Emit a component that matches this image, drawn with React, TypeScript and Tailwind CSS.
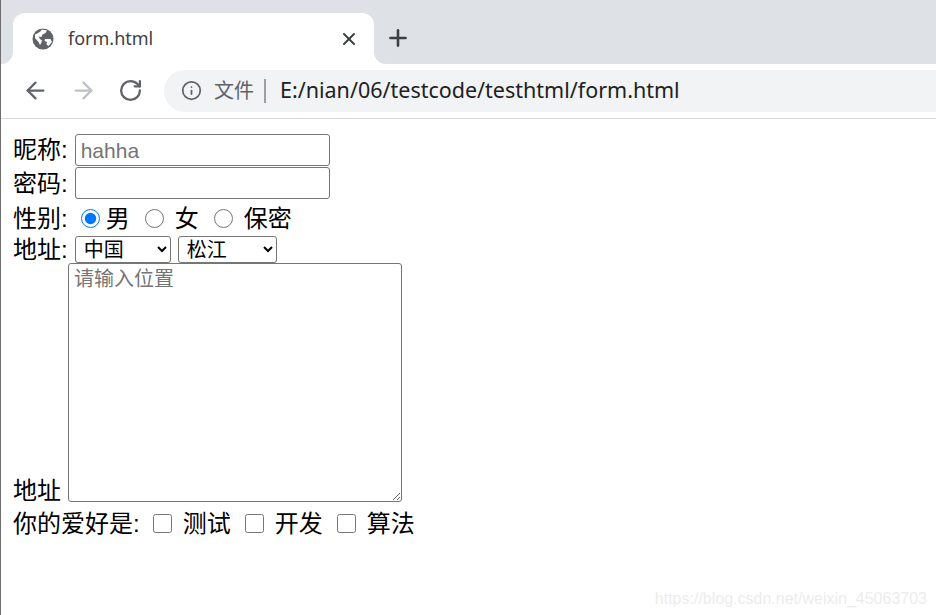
import { X, Plus, ArrowLeft, ArrowRight, RotateCw, Info } from "lucide-react";

const CJK = "font-['Liberation_Sans','Noto_Sans_CJK_SC',sans-serif]";
const UI = "font-['Noto_Sans','Noto_Sans_CJK_SC',sans-serif]";

function Globe() {
  return (
    <svg width="22" height="22" viewBox="0 0 22 22" className="shrink-0">
      <circle cx="11" cy="11" r="10.5" fill="#5f6368" />
      <path
        d="M3 6.5 C6 5 8 4 10 1.5 L15 2.5 L13.5 5 L10.5 6.5 L9.5 9 L6.5 8.5 L8 11 L10 12.5 L9.5 14.5 L8 17 L6.5 14 L3 10 Z"
        fill="#fff"
      />
      <path d="M13 11 L18.5 11 L20 14 L16.5 18 L14.5 16.5 L15 14 L12.5 13 Z" fill="#fff" />
    </svg>
  );
}

function Flare({ side }: { side: "left" | "right" }) {
  return (
    <svg
      width="12"
      height="12"
      viewBox="0 0 12 12"
      className={side === "left" ? "absolute bottom-0 -left-3" : "absolute bottom-0 -right-3"}
    >
      {side === "left" ? (
        <path d="M12 0 A12 12 0 0 1 0 12 L12 12 Z" fill="#fff" />
      ) : (
        <path d="M0 0 A12 12 0 0 0 12 12 L0 12 Z" fill="#fff" />
      )}
    </svg>
  );
}

function BrowserBar() {
  return (
    <header className={`${UI} shrink-0`}>
      <div className="flex h-16 items-end bg-[#dee1e6] pl-3">
        <div className="relative flex h-[51px] w-[361px] items-center rounded-t-xl bg-white pl-[19px] pr-[15px]">
          <Flare side="left" />
          <Flare side="right" />
          <Globe />
          <span className="ml-[14px] flex-1 text-[18px] text-[#3c4043]">form.html</span>
          <X size={20} strokeWidth={2.4} className="text-[#3c4043]" />
        </div>
        <Plus size={26} strokeWidth={2.4} className="mb-[13px] ml-[11px] text-[#3c4043]" />
      </div>
      <div className="flex h-[55px] items-center border-b border-[#d6d8da] bg-white pb-[1px] pl-[21px]">
        <ArrowLeft size={27} strokeWidth={2} className="text-[#5f6368]" />
        <ArrowRight size={27} strokeWidth={2} className="ml-[21px] text-[#bdc1c6]" />
        <RotateCw size={25} strokeWidth={2.2} className="ml-[21px] text-[#5f6368]" />
        <div className="ml-[21px] flex h-[42px] flex-1 items-center rounded-l-[21px] bg-[#f1f3f4] pl-[17px]">
          <Info size={21} strokeWidth={2} className="text-[#5f6368]" />
          <span className="ml-[12px] text-[20px] text-[#5f6368]">文件</span>
          <span className="ml-[10px] h-[24px] w-[2px] bg-[#9aa0a6]" />
          <span className="ml-[14px] text-[21.5px] text-[#202124]">E:/nian/06/testcode/testhtml/form.html</span>
        </div>
      </div>
    </header>
  );
}

function Choice({ type, name, label, checked, labelGap }: { type: string; name: string; label: string; checked?: boolean; labelGap: string }) {
  return (
    <label className="flex items-center">
      <input type={type} name={name} defaultChecked={checked} className="h-[19px] w-[19px] shrink-0" />
      <span className={labelGap}>{label}</span>
    </label>
  );
}

const fieldClass =
  "h-[32px] w-[255px] rounded-[3px] border border-[#767676] bg-white px-[5px] text-[21px] placeholder:text-[#757575]";
const selectClass = "h-[27px] rounded-[3px] border border-[#767676] bg-white pl-[4px] text-[20px] text-black";

export default function App() {
  return (
    <div className={`${CJK} relative flex h-[615px] w-[936px] flex-col overflow-hidden border-l border-[#6e6e6e] bg-white text-black`}>
      <BrowserBar />
      <form className="flex flex-col pl-3 pt-[15px] text-[24px] leading-[33px]">
        <div className="flex h-[33px] items-start">
          <span className="-mt-[1px]">昵称:</span>
          <input type="text" placeholder="hahha" className={`${fieldClass} ml-[7px]`} />
        </div>
        <div className="flex h-[34px] items-start">
          <span>密码:</span>
          <input type="password" className={`${fieldClass} ml-[7px]`} />
        </div>
        <div className="flex h-[35px] items-center">
          <span>性别:</span>
          <div className="ml-[13px] flex items-center gap-[15px]">
            <Choice type="radio" name="sex" label="男" checked labelGap="ml-[6px]" />
            <Choice type="radio" name="sex" label="女" labelGap="ml-[11px]" />
            <Choice type="radio" name="sex" label="保密" labelGap="ml-[11px]" />
          </div>
        </div>
        <div className="flex h-[27px] items-start">
          <span className="-mt-[3px]">地址:</span>
          <select className={`${selectClass} ml-[7px] w-[96px]`}>
            <option>中国</option>
          </select>
          <select className={`${selectClass} ml-[7px] w-[99px]`}>
            <option>松江</option>
          </select>
        </div>
        <div className="flex items-end">
          <span className="-mb-[5px]">地址</span>
          <textarea
            placeholder="请输入位置"
            className="ml-[7px] h-[239px] w-[334px] rounded-[3px] border border-[#767676] bg-white px-[5px] py-[2px] text-[20px] leading-[26px] placeholder:text-[#757575]"
          />
        </div>
        <div className="flex h-[44px] items-center pb-[2px]">
          <span>你的爱好是:</span>
          <div className="ml-[13px] flex items-center gap-[14px]">
            <Choice type="checkbox" name="hobby" label="测试" labelGap="ml-[11px]" />
            <Choice type="checkbox" name="hobby" label="开发" labelGap="ml-[11px]" />
            <Choice type="checkbox" name="hobby" label="算法" labelGap="ml-[11px]" />
          </div>
        </div>
      </form>
      <span className="absolute bottom-[8px] right-[9px] text-[16px] leading-none text-[#ececec]">
        https://blog.csdn.net/weixin_45063703
      </span>
    </div>
  );
}
